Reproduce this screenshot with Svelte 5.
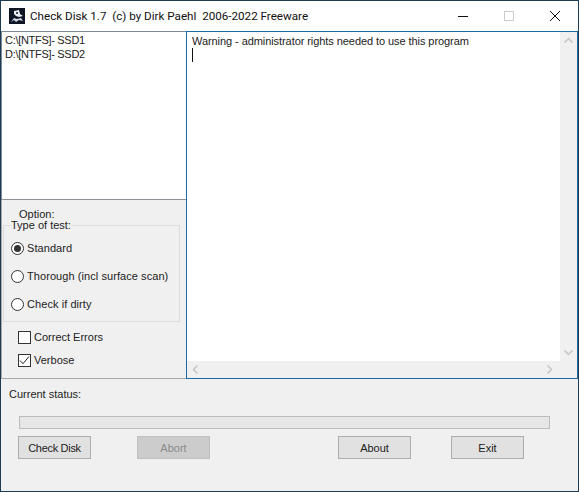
<script>
  const drives = ['C:\\[NTFS]- SSD1', 'D:\\[NTFS]- SSD2'];
  const tests = [
    { label: 'Standard', checked: true },
    { label: 'Thorough (incl surface scan)', checked: false },
    { label: 'Check if dirty', checked: false }
  ];
</script>

<div class="window">
  <header class="titlebar">
    <svg class="app-icon" width="16" height="16" viewBox="0 0 16 16">
      <rect width="16" height="16" fill="#0e1626" />
      <path d="M5 3 L10 2 L11 6 L14 8 L10 9 L7 8 L5 6 Z" fill="#e8eef2" />
      <path d="M2 14 L5 10 L8 11 L12 10 L14 13 L10 12 L7 14 L5 12 Z" fill="#cfd8de" />
      <circle cx="8" cy="5" r="1" fill="#0e1626" />
    </svg>
    <span class="title">Check Disk 1.7&nbsp; (c) by Dirk Paehl&nbsp; 2006-2022 Freeware</span>
    <div class="caption-buttons">
      <svg width="46" height="30" viewBox="0 0 46 30"><path d="M18 15.5h10" stroke="#111" fill="none" /></svg>
      <svg width="46" height="30" viewBox="0 0 46 30"><rect x="18.5" y="10.5" width="9" height="9" stroke="#ccc" fill="none" /></svg>
      <svg width="46" height="30" viewBox="0 0 46 30"><path d="M18 10l10 10M28 10l-10 10" stroke="#111" fill="none" /></svg>
    </div>
  </header>

  <div class="main">
    <div class="left">
      <ul class="drives">
        {#each drives as d}<li>{d}</li>{/each}
      </ul>
      <div class="options">
        <div class="option-label">Option:</div>
        <fieldset class="group">
          <legend>Type of test:</legend>
          {#each tests as t}
            <div class="radio-row">
              <span class="radio" class:checked={t.checked}></span>
              <span>{t.label}</span>
            </div>
          {/each}
        </fieldset>
        <div class="check-row">
          <span class="check"></span>
          <span>Correct Errors</span>
        </div>
        <div class="check-row second">
          <span class="check">
            <svg width="13" height="13" viewBox="0 0 13 13"><path d="M2 6.5l3 3.2 6-7.2" stroke="#222" fill="none" /></svg>
          </span>
          <span>Verbose</span>
        </div>
      </div>
    </div>

    <div class="editor">
      <div class="editor-top">
        <div class="text">
          <div>Warning - administrator rights needed to use this program</div>
          <div class="caret"></div>
        </div>
        <div class="vscroll">
          <svg width="17" height="17" viewBox="0 0 17 17"><path d="M4.5 10.5l4-4 4 4" stroke="#c4c4c4" stroke-width="1.5" fill="none" /></svg>
          <svg width="17" height="17" viewBox="0 0 17 17"><path d="M4.5 6.5l4 4 4-4" stroke="#c4c4c4" stroke-width="1.5" fill="none" /></svg>
        </div>
      </div>
      <div class="hscroll">
        <svg width="17" height="17" viewBox="0 0 17 17"><path d="M10.5 4.5l-4 4 4 4" stroke="#c4c4c4" stroke-width="1.5" fill="none" /></svg>
        <svg width="17" height="17" viewBox="0 0 17 17"><path d="M6.5 4.5l4 4-4 4" stroke="#c4c4c4" stroke-width="1.5" fill="none" /></svg>
      </div>
    </div>
  </div>

  <div class="status">
    <div class="status-label">Current status:</div>
    <div class="progress"></div>
    <div class="buttons">
      <button class="b1">Check Disk</button>
      <button class="b2" disabled>Abort</button>
      <button class="b3">About</button>
      <button class="b4">Exit</button>
    </div>
  </div>
</div>

<style>
  :global(body) {
    margin: 0;
    background: #f0f0f0;
  }

  .window {
    width: 579px;
    height: 492px;
    box-sizing: border-box;
    border: 1px solid #1f3b52;
    display: flex;
    flex-direction: column;
    background: #f0f0f0;
    font-family: "Liberation Sans", Arial, sans-serif;
    font-size: 11px;
    color: #222;
  }

  .titlebar {
    height: 30px;
    flex: none;
    background: #fff;
    display: flex;
    align-items: center;
    padding-left: 8px;
  }

  .app-icon {
    flex: none;
  }

  .title {
    margin-left: 5px;
    font-family: Roboto, sans-serif;
    font-size: 11.65px;
    color: #111;
  }

  .caption-buttons {
    margin-left: auto;
    display: flex;
  }

  .caption-buttons svg {
    display: block;
  }

  .main {
    height: 348px;
    flex: none;
    display: flex;
  }

  .left {
    width: 185px;
    flex: none;
    display: flex;
    flex-direction: column;
  }

  .drives {
    list-style: none;
    margin: 0;
    padding: 1px 3px;
    height: 169px;
    box-sizing: border-box;
    flex: none;
    background: #fff;
    border-top: 1px solid #7a8a98;
    border-left: 1px solid #7a8a98;
    border-bottom: 1px solid #8a9095;
    line-height: 14px;
    letter-spacing: -0.3px;
  }

  .options {
    flex: 1;
    padding: 9px 5px 0 1px;
    border-left: 1px solid #a8a8a8;
    border-bottom: 1px solid #a8a8a8;
  }

  .option-label {
    margin-left: 16px;
    line-height: 11px;
  }

  .group {
    margin: 0;
    padding: 3px 0 0 7px;
    height: 102px;
    box-sizing: border-box;
    width: 177px;
    border: 1px solid #dcdcdc;
  }

  legend {
    padding: 0;
    line-height: 11px;
  }

  .radio-row {
    display: flex;
    align-items: center;
    gap: 3px;
    height: 28px;
    letter-spacing: 0.07px;
  }

  .radio {
    width: 13px;
    height: 13px;
    box-sizing: border-box;
    border: 1px solid #333;
    border-radius: 50%;
    background: #fff;
    position: relative;
  }

  .radio.checked::after {
    content: '';
    position: absolute;
    inset: 2px;
    border-radius: 50%;
    background: #333;
  }

  .check-row {
    display: flex;
    align-items: center;
    gap: 3px;
    height: 14px;
    margin: 8px 0 0 15px;
  }

  .check-row.second {
    margin-top: 9px;
  }

  .check {
    width: 13px;
    height: 13px;
    box-sizing: border-box;
    border: 1px solid #333;
    background: #fff;
    position: relative;
  }

  .check svg {
    position: absolute;
    left: -1px;
    top: -1px;
  }

  .editor {
    flex: 1;
    border: 1px solid #1e6aa5;
    display: flex;
    flex-direction: column;
    background: #fff;
  }

  .editor-top {
    flex: 1;
    display: flex;
    min-height: 0;
  }

  .text {
    flex: 1;
    padding: 2px 5px;
    line-height: 14px;
    letter-spacing: -0.07px;
  }

  .caret {
    width: 1px;
    height: 14px;
    background: #111;
  }

  .vscroll {
    width: 17px;
    flex: none;
    background: #f0f0f0;
    display: flex;
    flex-direction: column;
    justify-content: space-between;
  }

  .hscroll {
    height: 17px;
    flex: none;
    box-sizing: border-box;
    padding-right: 19px;
    background: #f0f0f0;
    display: flex;
    justify-content: space-between;
  }

  svg {
    display: block;
  }

  .status {
    flex: 1;
    display: flex;
    flex-direction: column;
    padding: 8px 0 0 8px;
  }

  .status-label {
    line-height: 14px;
  }

  .progress {
    margin: 15px 0 0 10px;
    width: 531px;
    height: 13px;
    box-sizing: border-box;
    background: #e6e6e6;
    border: 1px solid #bcbcbc;
  }

  .buttons {
    display: flex;
    margin: 7px 0 0 9px;
  }

  button {
    width: 73px;
    height: 23px;
    box-sizing: border-box;
    padding: 0;
    border: 1px solid #adadad;
    background: #e1e1e1;
    color: #222;
    font: inherit;
  }

  button:disabled {
    background: #cccccc;
    border-color: #bfbfbf;
    color: #8a8a8a;
  }

  .b1 {
    letter-spacing: -0.3px;
  }

  .b2 {
    margin-left: 46px;
  }

  .b3 {
    margin-left: 128px;
  }

  .b4 {
    margin-left: 40px;
  }
</style>
